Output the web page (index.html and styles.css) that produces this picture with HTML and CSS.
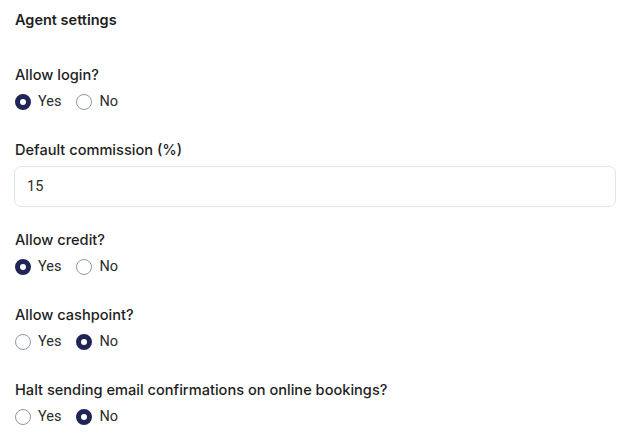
FILE: index.html
```html
<!DOCTYPE html>
<html>
<head>
<meta charset="utf-8">
<link rel="stylesheet" href="styles.css">
</head>
<body>
<div class="page">
  <h2 class="title">Agent settings</h2>
  <div class="fields">
    <div class="field">
      <div class="label">Allow login?</div>
      <div class="radios">
        <label class="radio"><span class="dot on"></span>Yes</label>
        <label class="radio"><span class="dot"></span>No</label>
      </div>
    </div>
    <div class="field field-input">
      <div class="label">Default commission (%)</div>
      <div class="input">15</div>
    </div>
    <div class="field">
      <div class="label">Allow credit?</div>
      <div class="radios">
        <label class="radio"><span class="dot on"></span>Yes</label>
        <label class="radio"><span class="dot"></span>No</label>
      </div>
    </div>
    <div class="field">
      <div class="label">Allow cashpoint?</div>
      <div class="radios">
        <label class="radio"><span class="dot"></span>Yes</label>
        <label class="radio"><span class="dot on"></span>No</label>
      </div>
    </div>
    <div class="field">
      <div class="label">Halt sending email confirmations on online bookings?</div>
      <div class="radios">
        <label class="radio"><span class="dot"></span>Yes</label>
        <label class="radio"><span class="dot on"></span>No</label>
      </div>
    </div>
  </div>
</div>
</body>
</html>
```
FILE: styles.css
```css
html, body {
  margin: 0;
  padding: 0;
  background: #ffffff;
}
.page {
  padding: 10px 14px 0 14px;
  font-family: Inter, "Liberation Sans", sans-serif;
  color: #1e1e1e;
}
.title {
  margin: 0;
  font-size: 14.5px;
  line-height: 20px;
  font-weight: 600;
  padding-left: 1px;
}
.fields {
  margin-top: 35px;
  display: flex;
  flex-direction: column;
  gap: 28px;
}
.field {
  display: flex;
  flex-direction: column;
  gap: 6px;
}
.field-input {
  margin-bottom: -5px;
}
.label {
  font-size: 14.6px;
  line-height: 20px;
  font-weight: 500;
  padding-left: 1px;
}
.radios {
  display: flex;
  gap: 14px;
  margin-top: 1px;
  font-family: Roboto, "Liberation Sans", sans-serif;
  font-size: 14.5px;
  line-height: 20px;
  color: #2c2c2c;
}
.radio {
  display: flex;
  align-items: center;
  gap: 7px;
  padding-left: 1px;
}
.dot {
  width: 16px;
  height: 16px;
  box-sizing: border-box;
  border-radius: 50%;
  border: 1px solid #8c9aaa;
  background: #fff;
}
.dot.on {
  border: 5px solid #1f2557;
}
.input {
  height: 41px;
  box-sizing: border-box;
  border: 1px solid #dfe5f2;
  border-radius: 7px;
  padding: 0 12px;
  display: flex;
  align-items: center;
  font-family: Roboto, "Liberation Sans", sans-serif;
  font-size: 14.5px;
  color: #2c2c2c;
  width: 602px;
}
```
